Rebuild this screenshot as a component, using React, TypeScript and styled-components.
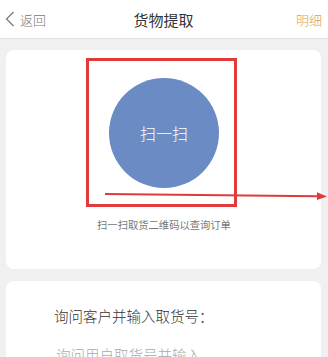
import styled, { createGlobalStyle } from "styled-components";

const GlobalStyle = createGlobalStyle`
  html, body {
    margin: 0;
    padding: 0;
    background: #f0f0f0;
    font-family: "Noto Sans CJK SC", "Noto Sans", sans-serif;
  }
  * { box-sizing: border-box; }
`;

export default function App() {
  return (
    <>
      <GlobalStyle />
      <Page>
        <Header>
          <BackButton>
            <svg width="10" height="16" viewBox="0 0 10 16">
              <path d="M8.5 1 L1.5 8 L8.5 15" fill="none" stroke="#777" strokeWidth="1.2" />
            </svg>
            <span>返回</span>
          </BackButton>
          <Title>货物提取</Title>
          <DetailLink>明细</DetailLink>
        </Header>

        <Body>
          <ScanCard>
            <ScanButton>扫一扫</ScanButton>
            <Caption>扫一扫取货二维码以查询订单</Caption>
            <HighlightBox />
            <Arrow width="224" height="10" viewBox="0 0 224 10">
              <path d="M0 3 L212 5.2" stroke="#e03a3a" strokeWidth="2" />
              <path d="M212 1.2 L222 5.4 L212 9 Z" fill="#e03a3a" />
            </Arrow>
          </ScanCard>

          <CodeCard>
            <CodeLabel>询问客户并输入取货号：</CodeLabel>
            <CodeInput placeholder="询问用户取货号并输入" />
          </CodeCard>
        </Body>
      </Page>
    </>
  );
}

const Page = styled.div`
  width: 328px;
  height: 357px;
  overflow: hidden;
  background: #f0f0f0;
`;

const Header = styled.div`
  height: 39px;
  display: grid;
  grid-template-columns: 1fr auto 1fr;
  align-items: center;
  padding: 0 6px 0 5px;
  background: #fff;
  border-bottom: 1px solid #e4e4e4;
`;

const BackButton = styled.div`
  display: flex;
  align-items: center;
  gap: 5px;
  font-size: 13px;
  font-weight: 300;
  color: #777;
  span {
    line-height: 1;
  }
`;

const Title = styled.div`
  font-size: 15px;
  color: #333;
`;

const DetailLink = styled.div`
  justify-self: end;
  font-size: 13px;
  font-weight: 300;
  color: #dd9f55;
`;

const Body = styled.div`
  display: flex;
  flex-direction: column;
  gap: 12px;
  padding: 11px 7px 0 6px;
`;

const Card = styled.div`
  background: #fff;
  border-radius: 8px;
`;

const ScanCard = styled(Card)`
  position: relative;
  height: 219px;
  display: flex;
  flex-direction: column;
  align-items: center;
  padding-top: 28px;
`;

const ScanButton = styled.div`
  width: 110px;
  height: 110px;
  border-radius: 50%;
  background: #6b8bc4;
  color: #fff;
  font-size: 16px;
  font-weight: 300;
  display: flex;
  align-items: center;
  justify-content: center;
  margin-left: 1px;
`;

const Caption = styled.div`
  margin-top: 29px;
  font-size: 10.3px;
  color: #777;
  margin-left: 1px;
`;

const HighlightBox = styled.div`
  position: absolute;
  left: 80px;
  top: 8px;
  width: 151px;
  height: 149px;
  border: 3px solid #e03a3a;
`;

const Arrow = styled.svg`
  position: absolute;
  left: 99px;
  top: 141px;
`;

const CodeCard = styled(Card)`
  height: 120px;
  padding: 24px 48px 0;
  display: flex;
  flex-direction: column;
  gap: 18px;
`;

const CodeLabel = styled.div`
  font-size: 14.5px;
  font-weight: 300;
  color: #333;
`;

const CodeInput = styled.input`
  border: none;
  outline: none;
  padding: 0 2px;
  font-family: inherit;
  font-size: 14.5px;
  font-weight: 300;
  color: #333;
  background: transparent;
  &::placeholder {
    color: #aaa;
  }
`;
